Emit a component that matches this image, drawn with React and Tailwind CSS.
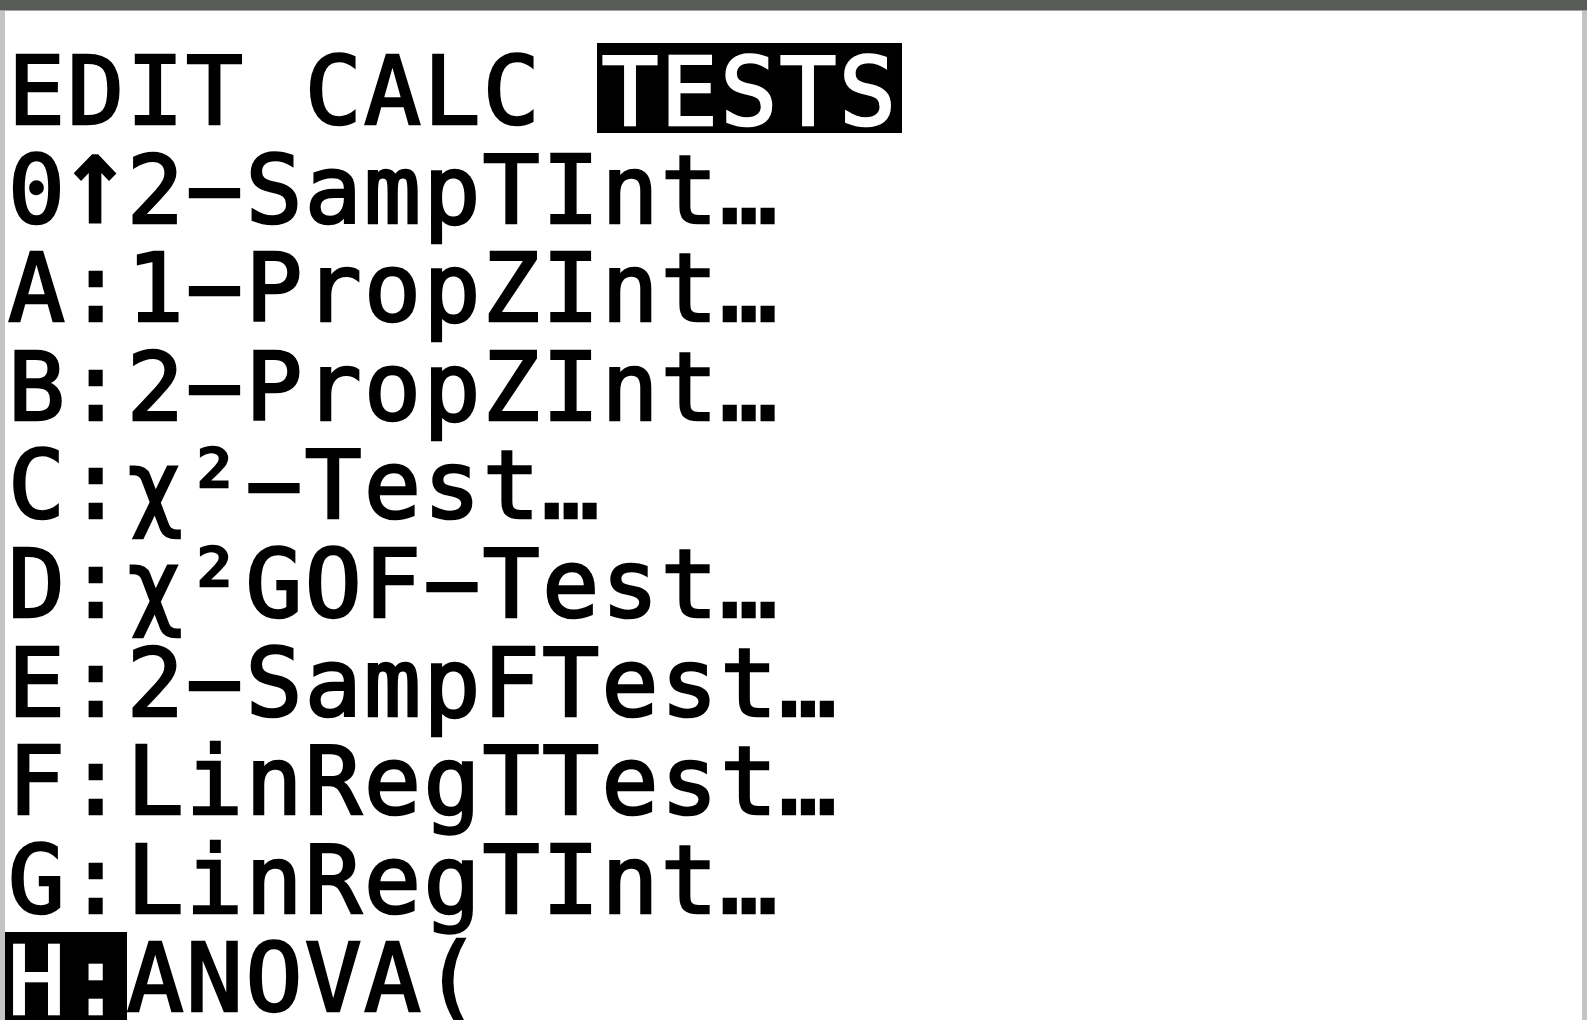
import React from "react";

// TI-84 style list menu: STAT > TESTS, scrolled to the bottom
const items = [
  "A:1−PropZInt…",
  "B:2−PropZInt…",
  "C:χ²−Test…",
  "D:χ²GOF−Test…",
  "E:2−SampFTest…",
  "F:LinRegTTest…",
  "G:LinRegTInt…",
];

function Row({ children }) {
  return <div className="h-[98.6px] whitespace-pre">{children}</div>;
}

export default function App() {
  return (
    <div className="w-[1587px] h-[1020px] overflow-hidden flex flex-col bg-white">
      <div className="h-[11px] shrink-0 bg-[#585b57] border-b border-[#a3a3a3]" />

      <div className="flex flex-1 min-h-0">
        <div className="w-[5px] shrink-0 bg-[#c4c4c4]" />

        {/* regular weight thickened a little with a stroke, closer to the LCD pixel font */}
        <div className="flex-1 min-w-0 overflow-hidden pt-[31px] pl-[3px] text-black font-['DejaVu_Sans_Mono','Liberation_Mono',monospace] text-[94.6px] leading-[98.6px] tracking-[2.4px] [-webkit-text-stroke-width:2.5px]">
          <Row>
            EDIT CALC{" "}
            <span className="relative top-px inline-block h-[90px] -ml-[5px] pl-[5px] pr-[4px] bg-black text-white">
              TESTS
            </span>
          </Row>

          {/* scroll indicator: the arrow is drawn taller than the default glyph */}
          <Row>
            0
            <span className="inline-block origin-[50%_88%] scale-x-[1.25] scale-y-[1.3]">↑</span>
            2−SampTInt…
          </Row>

          {items.map((item) => (
            <Row key={item}>{item}</Row>
          ))}

          <Row>
            <span className="relative top-[3px] inline-block h-[95px] -ml-[8px] pl-[8px] bg-black text-white">
              H:
            </span>
            ANOVA(
          </Row>
        </div>

        <div className="w-[5px] shrink-0 bg-[#c4c4c4]" />
      </div>
    </div>
  );
}
